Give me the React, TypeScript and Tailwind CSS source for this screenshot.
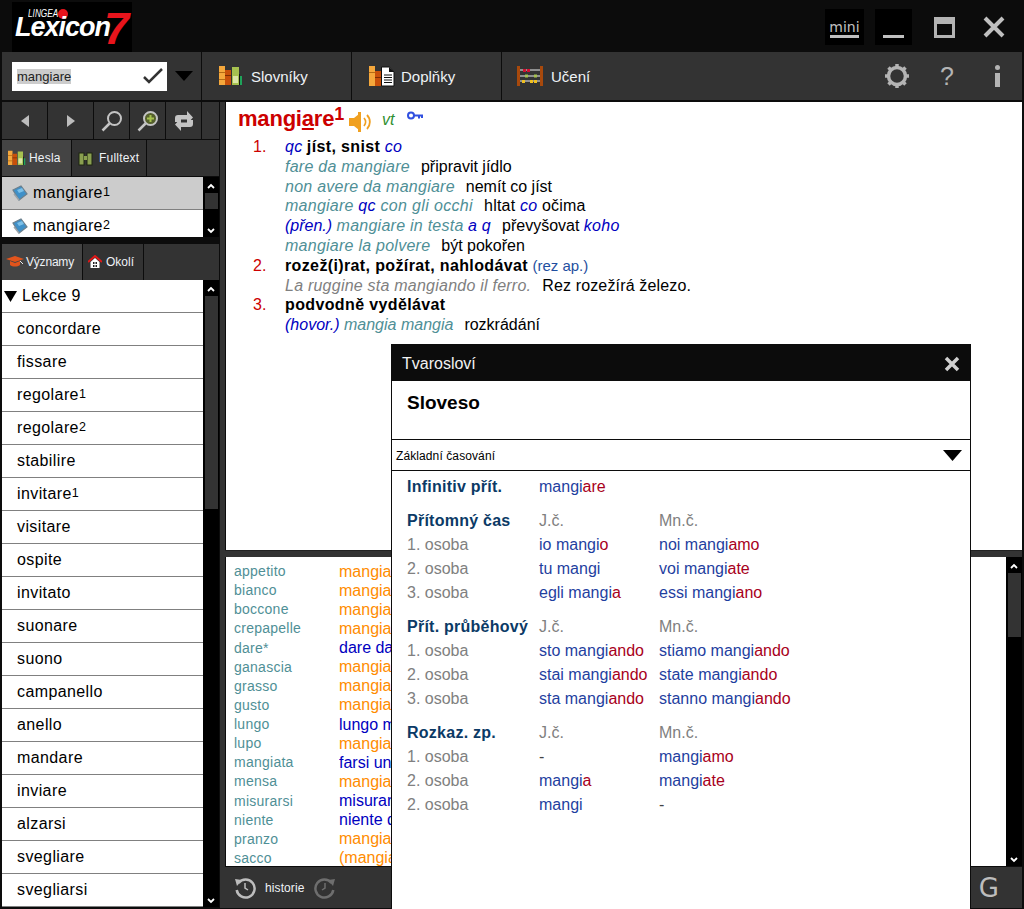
import React from "react";

const Books = ({ s = 1 }: { s?: number }) => (
  <svg width={24 * s} height={22 * s} viewBox="0 0 24 22">
    <rect x="0" y="1" width="6" height="19" fill="#f5a83c" />
    <rect x="0" y="7" width="6" height="1" fill="#b46a14" />
    <rect x="0" y="14" width="6" height="1" fill="#b46a14" />
    <rect x="6" y="5" width="6" height="15" fill="#c8500a" />
    <rect x="6" y="10" width="6" height="1" fill="#7c2c04" />
    <rect x="13" y="2" width="7" height="18" fill="#a6c14f" />
    <rect x="14" y="11" width="5" height="7" fill="#dde6a8" />
    <rect x="20" y="9" width="1" height="11" fill="#111" />
    <rect x="21" y="11" width="2" height="9" fill="#1fa35a" />
  </svg>
);

const DocBooks = () => (
  <svg width="26" height="21" viewBox="0 0 26 21">
    <rect x="0" y="0" width="6" height="20" fill="#f5a83c" />
    <rect x="0" y="6" width="6" height="1" fill="#b46a14" />
    <rect x="6" y="5" width="6" height="15" fill="#c8500a" />
    <rect x="6" y="11" width="6" height="1" fill="#7c2c04" />
    <path d="M12.5 1h8l4.500 5v14h-12.500z" fill="#fff" stroke="#111" strokeWidth="1" />
    <path d="M20 1v5h5z" fill="#111" />
    <path d="M15 9h8M15 11.500h8M15 14h8M15 16.500h8" stroke="#111" strokeWidth="1" />
  </svg>
);

const Abacus = () => (
  <svg width="26" height="20" viewBox="0 0 26 20">
    <rect x="0" y="0" width="3" height="20" fill="#a8490c" />
    <rect x="23" y="0" width="3" height="20" fill="#a8490c" />
    <path d="M3 4h20M3 10h20M3 15h20" stroke="#eee" strokeWidth="1" />
    <rect x="6" y="3" width="3" height="3" fill="#d01030" />
    <rect x="10" y="3" width="3" height="3" fill="#d01030" />
    <rect x="8" y="8.500" width="3" height="3" fill="#a6c14f" />
    <rect x="17" y="8.500" width="3" height="3" fill="#a6c14f" />
    <rect x="5" y="14" width="3" height="3" fill="#f0c020" />
    <rect x="13" y="14" width="3" height="3" fill="#f0c020" />
    <rect x="17" y="14" width="3" height="3" fill="#f0c020" />
  </svg>
);

const Tri = ({ dir }: { dir: "l" | "r" }) => (
  <svg width="10" height="14" viewBox="0 0 10 14">
    <path d={dir === "l" ? "M9 1v12L1 7z" : "M1 1v12l8-6z"} fill="#bdbdbd" />
  </svg>
);

const Lens = ({ plus }: { plus?: boolean }) => (
  <svg width="22" height="22" viewBox="0 0 22 22">
    <circle cx="13.500" cy="8.500" r="6.500" fill={plus ? "#55602c" : "none"} stroke="#c4c4c4" strokeWidth="2" />
    <path d="M8.500 13.500l-7 7" stroke="#c4c4c4" strokeWidth="2.500" />
    {plus && <path d="M13.500 5v7M10 8.500h7" stroke="#a6c14f" strokeWidth="2" />}
  </svg>
);

const Repeat = () => (
  <svg width="20" height="20" viewBox="0 0 20 20">
    <path d="M1 11V7a3 3 0 0 1 3-3h9V0l6 6.500-6 6.500V8.500H6V11z" fill="#c4c4c4" />
    <path d="M19 9v4a3 3 0 0 1-3 3H7v4l-6-6.500L7 7v4.500h7V9z" fill="#c4c4c4" />
  </svg>
);

const Dict = () => (
  <svg width="16" height="16" viewBox="0 0 16 16">
    <path d="M1 5l8-4 6 8-8 6z" fill="#3f90c8" stroke="#6b7f8c" strokeWidth="1.200" />
    <path d="M5 5l5-2 2 3-5 2z" fill="#7cc0e8" />
    <path d="M2 9l5 6" stroke="#9aa5ac" strokeWidth="1.500" />
  </svg>
);

const Scroll = ({ thumbTop, thumbH, className }: { thumbTop: number; thumbH: number; className: string }) => (
  <div className={`relative bg-black shrink-0 flex flex-col justify-between items-center ${className}`}>
    <svg width="8" height="6" viewBox="0 0 8 6" className="mt-[6px]">
      <path d="M1 5l3-3 3 3" stroke="#fff" strokeWidth="1.800" fill="none" />
    </svg>
    <svg width="8" height="6" viewBox="0 0 8 6" className="mb-[3px]">
      <path d="M1 1l3 3 3-3" stroke="#fff" strokeWidth="1.800" fill="none" />
    </svg>
    <div className="absolute left-[2px] right-[1px] bg-[#333333]" style={{ top: thumbTop, height: thumbH }} />
  </div>
);

const lesson: [string, string?][] = [
  ["concordare"], ["fissare"], ["regolare", "1"], ["regolare", "2"], ["stabilire"], ["invitare", "1"],
  ["visitare"], ["ospite"], ["invitato"], ["suonare"], ["suono"], ["campanello"], ["anello"], ["mandare"],
  ["inviare"], ["alzarsi"], ["svegliare"], ["svegliarsi"],
];

const related: [string, string, string][] = [
  ["appetito", "mangia", "text-[#ff8c00]"],
  ["bianco", "mangia", "text-[#ff8c00]"],
  ["boccone", "mangia", "text-[#ff8c00]"],
  ["crepapelle", "mangia", "text-[#ff8c00]"],
  ["dare*", "dare da", "text-[#0000c0]"],
  ["ganascia", "mangia", "text-[#ff8c00]"],
  ["grasso", "mangia", "text-[#ff8c00]"],
  ["gusto", "mangia", "text-[#ff8c00]"],
  ["lungo", "lungo m", "text-[#0000c0]"],
  ["lupo", "mangia", "text-[#ff8c00]"],
  ["mangiata", "farsi un", "text-[#0000c0]"],
  ["mensa", "mangia", "text-[#ff8c00]"],
  ["misurarsi", "misurar", "text-[#0000c0]"],
  ["niente", "niente d", "text-[#0000c0]"],
  ["pranzo", "mangia", "text-[#ff8c00]"],
  ["sacco", "(mangia", "text-[#ff8c00]"],
];

const Form = ({ a, b }: { a: string; b?: string }) => (
  <span className="text-[#1f3f9f]">
    {a}
    {b && <span className="text-[#a80020]">{b}</span>}
  </span>
);

const Row = ({ l, c2, c3, head, cls = "" }: { l: React.ReactNode; c2: React.ReactNode; c3?: React.ReactNode; head?: boolean; cls?: string }) => (
  <div className={`flex h-[24px] items-center ${cls}`}>
    <div className={`w-[132px] shrink-0 ${head ? "font-bold text-[#0b3a66] tracking-[0.25px]" : "text-[#808080]"}`}>{l}</div>
    <div className={`w-[120px] shrink-0 ${head ? "text-[#808080]" : ""}`}>{c2}</div>
    <div className={head ? "text-[#808080]" : ""}>{c3}</div>
  </div>
);

const Teal = ({ children }: { children: React.ReactNode }) => <i className="text-[#4f8f96] tracking-[0.25px]">{children}</i>;
const Blue = ({ children }: { children: React.ReactNode }) => <i className="text-[#0000c0] tracking-[0.25px]">{children}</i>;
const Bold = ({ children }: { children: React.ReactNode }) => <b className="tracking-[0.37px]">{children}</b>;
const Gap = () => <span className="inline-block w-[11px]" />;

const NavCell = ({ w, children }: { w: string; children?: React.ReactNode }) => (
  <div className={`${w} shrink-0 h-full bg-[#333333] flex items-center justify-center border-r-[1px] border-[#0c0c0c]`}>{children}</div>
);

export default function App() {
  return (
    <div className="relative w-[1024px] h-[909px] overflow-hidden bg-[#0c0c0c] flex flex-col text-black font-['Liberation_Sans',Arial,sans-serif]">
      {/* Title bar */}
      <div className="h-[52px] shrink-0 flex items-start pl-[12px] pr-[19px]">
        <div className="w-[120px] h-[50px] mt-[2px] bg-black relative overflow-hidden">
          <span className="absolute left-[16px] top-[5px] text-[11px] leading-[12px] italic text-white origin-left scale-x-75">LINGEA</span>
          <span className="absolute left-[46px] top-[7px] w-[10px] h-[10px] rounded-full bg-[#e8141c]" />
          <span className="absolute left-[3px] top-[10px] text-[27px] leading-[30px] font-bold italic text-white tracking-[-1px]">Lexicon</span>
          <span className="absolute left-[92px] top-[6px] text-[45px] leading-[42px] font-bold italic text-[#e8141c]">7</span>
        </div>
        <div className="flex-1" />
        <div className="w-[39px] h-[36px] mt-[9px] bg-black flex flex-col items-center pt-[11px]">
          <span className="text-[14px] leading-[14px] text-[#c0c0c0] font-['DejaVu_Sans',sans-serif]">mini</span>
          <span className="w-[29px] h-[3px] bg-[#c0c0c0] mt-[1px]" />
        </div>
        <div className="w-[37px] h-[36px] mt-[9px] ml-[11px] bg-black flex items-end justify-center pb-[7px]">
          <span className="w-[21px] h-[3px] bg-[#c0c0c0]" />
        </div>
        <div className="w-[21px] h-[21px] mt-[17px] ml-[22px] border-[3px] border-t-[7px] border-[#b4b4b4]" />
        <svg width="22" height="22" viewBox="0 0 22 22" className="mt-[16px] ml-[28px]">
          <path d="M2 2l18 18M20 2L2 20" stroke="#c0c0c0" strokeWidth="4" />
        </svg>
      </div>

      {/* Toolbar */}
      <div className="h-[49px] shrink-0 flex mx-[2px] w-[1020px] bg-[#333333] border-b-[1px] border-[#0c0c0c]">
        <div className="w-[200px] shrink-0 flex items-center pl-[10px] border-r-[1px] border-[#0c0c0c]">
          <div className="w-[155px] h-[29px] bg-white flex items-center pl-[5px] pr-[4px] justify-between">
            <span className="bg-[#cccccc] text-[13px] leading-[15px] text-[#222]">mangiare</span>
            <svg width="20" height="16" viewBox="0 0 20 16">
              <path d="M1 9l5 5L19 1" stroke="#333" strokeWidth="2.500" fill="none" />
            </svg>
          </div>
          <svg width="18" height="10" viewBox="0 0 18 10" className="ml-[8px]">
            <path d="M0 0h18L9 10z" fill="#000" />
          </svg>
        </div>
        <div className="w-[150px] shrink-0 border-r-[1px] border-[#0c0c0c] flex items-center pl-[17px] gap-[8px] text-[15px] text-[#eef2f6]">
          <Books />
          <span className="pt-[2px]">Slovníky</span>
        </div>
        <div className="w-[150px] shrink-0 border-r-[1px] border-[#0c0c0c] flex items-center pl-[17px] gap-[6px] text-[15px] text-[#eef2f6]">
          <DocBooks />
          <span className="pt-[2px]">Doplňky</span>
        </div>
        <div className="flex-1 flex items-center pl-[15px] gap-[8px] text-[15px] text-[#eef2f6]">
          <Abacus />
          <span className="pt-[2px]">Učení</span>
          <div className="flex-1" />
          <svg width="26" height="26" viewBox="0 0 26 26" className="mr-[22px]">
            <circle cx="13" cy="13" r="8.500" fill="none" stroke="#b4b4b4" strokeWidth="3.500" />
            <path d="M13 1v4M13 21v4M1 13h4M21 13h4M4.500 4.500l3 3M18.500 18.500l3 3M21.500 4.500l-3 3M7.500 18.500l-3 3" stroke="#b4b4b4" strokeWidth="3.500" />
          </svg>
          <span className="text-[25px] leading-[25px] text-[#b4b4b4] mr-[33px]">?</span>
          <div className="flex flex-col items-center mr-[22px]">
            <span className="w-[5px] h-[5px] rounded-full bg-[#b4b4b4]" />
            <span className="w-[5px] h-[14px] bg-[#b4b4b4] mt-[3px]" />
          </div>
        </div>
      </div>

      {/* Main */}
      <div className="h-[806px] shrink-0 mt-[1px] flex ml-[2px] w-[1020px]">
        {/* Left column */}
        <div className="w-[218px] shrink-0 flex flex-col">
          <div className="h-[37px] shrink-0 flex bg-[#333333]">
            <NavCell w="w-[46px]"><Tri dir="l" /></NavCell>
            <NavCell w="w-[46px]"><Tri dir="r" /></NavCell>
            <NavCell w="w-[36px]"><Lens /></NavCell>
            <NavCell w="w-[36px]"><Lens plus /></NavCell>
            <NavCell w="w-[36px]"><Repeat /></NavCell>
            <div className="flex-1 border-r-[1px] border-[#0c0c0c]" />
          </div>
          <div className="h-[36px] mt-[1px] shrink-0 flex bg-[#333333] text-[12px] text-[#eef2f6] tracking-[0.2px]">
            <div className="w-[70px] shrink-0 bg-[#444444] border-r-[1px] border-[#0c0c0c] flex items-center pl-[6px] gap-[3px]">
              <Books s={0.75} />
              <span>Hesla</span>
            </div>
            <div className="w-[75px] shrink-0 border-r-[1px] border-[#0c0c0c] flex items-center pl-[6px] gap-[6px]">
              <svg width="15" height="15" viewBox="0 0 15 15">
                <rect x="1" y="2" width="5" height="12" fill="#8aa050" stroke="#1c2410" />
                <rect x="9" y="2" width="5" height="12" fill="#8aa050" stroke="#1c2410" />
                <rect x="6" y="5" width="3" height="4" fill="#8aa050" />
              </svg>
              <span>Fulltext</span>
            </div>
            <div className="flex-1 border-r-[1px] border-[#0c0c0c]" />
          </div>
          <div className="h-[60px] mt-[1px] shrink-0 flex text-[16px] tracking-[0.4px] border-r-[1px] border-[#0c0c0c]">
            <div className="w-[201px] shrink-0 overflow-hidden bg-white">
              <div className="h-[33px] bg-[#cccccc] border-b-[1px] border-[#808080] flex items-center pl-[10px] gap-[5px]">
                <Dict />
                <span>mangiare<span className="text-[12.500px] align-[2px]">1</span></span>
              </div>
              <div className="h-[27px] flex items-center pl-[10px] gap-[5px] pt-[5px]">
                <Dict />
                <span>mangiare<span className="text-[12.500px] align-[2px]">2</span></span>
              </div>
            </div>
            <Scroll thumbTop={16} thumbH={16} className="flex-1" />
          </div>
          <div className="h-[36px] mt-[7px] shrink-0 flex bg-[#333333] text-[12px] text-[#eef2f6]">
            <div className="w-[81px] shrink-0 bg-[#444444] border-r-[1px] border-[#0c0c0c] flex items-center pl-[4px]">
              <svg width="20" height="14" viewBox="0 0 20 14">
                <path d="M0 4l9-3 9 3-9 3z" fill="#e2541c" />
                <path d="M4 6v4c3 2 7 2 10 0V6l-5 2z" fill="#e2541c" />
                <path d="M14 6l3 3" stroke="#eee" strokeWidth="1" />
              </svg>
              <span className="tracking-[-0.2px]">Významy</span>
            </div>
            <div className="w-[61px] shrink-0 border-r-[1px] border-[#0c0c0c] flex items-center pl-[5px] gap-[4px]">
              <svg width="14" height="14" viewBox="0 0 14 14">
                <path d="M0 7l7-6 7 6" fill="none" stroke="#e01818" strokeWidth="2" />
                <path d="M2.500 7L7 3l4.500 4v6h-9z" fill="#fff" />
                <rect x="5" y="7" width="1.500" height="2" fill="#222" />
                <rect x="7.500" y="7" width="1.500" height="2" fill="#222" />
                <rect x="5" y="10" width="1.500" height="2" fill="#222" />
                <rect x="7.500" y="10" width="1.500" height="2" fill="#222" />
              </svg>
              <span>Okolí</span>
            </div>
            <div className="flex-1 border-r-[1px] border-[#0c0c0c]" />
          </div>
          <div className="flex-1 min-h-0 flex text-[16px] tracking-[0.4px] pb-[1px]">
            <div className="w-[201px] shrink-0 overflow-hidden bg-white">
              <div className="h-[33px] flex items-center pl-[2px] gap-[5px] border-b-[1px] border-[#808080]">
                <svg width="13" height="11" viewBox="0 0 13 11">
                  <path d="M0 0h13L6.500 11z" fill="#000" />
                </svg>
                <span>Lekce 9</span>
              </div>
              {lesson.map(([w, n], i) => (
                <div key={i} className="h-[33px] flex items-center pl-[15px] border-b-[1px] border-[#808080]">
                  <span>{w}{n && <span className="text-[12.500px] align-[2px]">{n}</span>}</span>
                </div>
              ))}
            </div>
            <Scroll thumbTop={16} thumbH={213} className="w-[16px] mr-[1px]" />
          </div>
        </div>

        {/* Right column */}
        <div className="flex-1 min-w-0 flex flex-col bg-[#333333] pl-[5px]">
          <div className="h-[448px] shrink-0 bg-white border-l-[1px] border-[#0c0c0c] text-[16px] pl-[12px] pt-[2px]">
            <div className="flex items-center h-[30px]">
              <span className="text-[22px] leading-[24px] font-bold text-[#cc0000] whitespace-nowrap tracking-[-0.2px]">
                mangi<span className="underline underline-offset-[2px]">a</span>re<span className="text-[18px] leading-[0px] align-[6px]">1</span>
              </span>
              <svg width="23" height="20" viewBox="0 0 23 20" className="ml-[5px] mt-[5px]">
                <path d="M0 6h5l5-4v16l-5-4H0z" fill="#f0a020" />
                <rect x="9" y="0" width="3" height="20" fill="#f0a020" />
                <path d="M15 6a6 6 0 0 1 0 8M18 3a10 10 0 0 1 0 14" stroke="#f0a020" strokeWidth="1.800" fill="none" />
              </svg>
              <i className="ml-[10px] mt-[1px] text-[#2f8f2f] text-[16px]">vt</i>
              <svg width="16" height="10" viewBox="0 0 16 10" className="ml-[12px] mb-[7px]">
                <circle cx="4" cy="4.500" r="3" fill="none" stroke="#3050e0" strokeWidth="2" />
                <path d="M7 4.500h9M12 4.500v3M15 4.500v2.500" stroke="#3050e0" strokeWidth="2" />
              </svg>
            </div>
            <div className="leading-[19.800px] mt-[3px]">
              <div className="flex">
                <span className="w-[47px] pl-[15px] text-[#cc0000] shrink-0">1.</span>
                <div>
                  <div><Blue>qc</Blue> <Bold>jíst, snist</Bold> <Blue>co</Blue></div>
                  <div><Teal>fare da mangiare</Teal><Gap />připravit jídlo</div>
                  <div><Teal>non avere da mangiare</Teal><Gap />nemít co jíst</div>
                  <div className="tracking-[0.2px]"><Teal>mangiare</Teal> <Blue>qc</Blue> <i className="text-[#4f8f96] tracking-[0.35px]">con gli occhi</i><Gap />hltat <Blue>co</Blue> očima</div>
                  <div><i className="text-[#0000c0]">(přen.)</i> <Teal>mangiare in testa</Teal> <Blue>a q</Blue><Gap />převyšovat <Blue>koho</Blue></div>
                  <div><Teal>mangiare la polvere</Teal><Gap />být pokořen</div>
                </div>
              </div>
              <div className="flex">
                <span className="w-[47px] pl-[15px] text-[#cc0000] shrink-0">2.</span>
                <div>
                  <div><Bold>rozež(i)rat, požírat, nahlodávat</Bold> <span className="text-[15px] text-[#1f4fa0]">(rez ap.)</span></div>
                  <div><i className="text-[#808080] tracking-[0.23px]">La ruggine sta mangiando il ferro.</i><Gap /><span className="tracking-[0.15px]">Rez rozežírá železo.</span></div>
                </div>
              </div>
              <div className="flex">
                <span className="w-[47px] pl-[15px] text-[#cc0000] shrink-0">3.</span>
                <div>
                  <div><Bold>podvodně vydělávat</Bold></div>
                  <div><i className="text-[#0000c0]">(hovor.)</i> <i className="text-[#4f8f96]">mangia mangia</i><Gap />rozkrádání</div>
                </div>
              </div>
            </div>
          </div>
          <div className="h-[7px] shrink-0 bg-[#333333] border-t-[1px] border-[#222]" />
          <div className="h-[310px] shrink-0 flex bg-white border-l-[1px] border-b-[1px] border-[#0c0c0c]">
            <div className="flex-1 min-w-0 overflow-hidden pl-[8px] pt-[5px]">
              {related.map(([a, b, c]) => (
                <div key={a} className="flex h-[19.130px] items-center whitespace-nowrap">
                  <span className="w-[105px] shrink-0 text-[14px] text-[#4f8f96] tracking-[0.25px]">{a}</span>
                  <span className={`w-[52px] overflow-hidden text-[16px] ${c}`}>{b}</span>
                </div>
              ))}
            </div>
            <Scroll thumbTop={16} thumbH={64} className="w-[16px]" />
          </div>
          <div className="flex-1 -ml-[5px] flex items-center pl-[14px] text-[12px] text-[#eef2f6]">
            <svg width="22" height="22" viewBox="0 0 22 22">
              <path d="M4.500 6a9 9 0 1 1-1.800 7" fill="none" stroke="#bdbdbd" strokeWidth="2.500" />
              <path d="M1 2l7 1-5 6z" fill="#bdbdbd" />
              <path d="M11 6v5l3 2" fill="none" stroke="#bdbdbd" strokeWidth="1.500" />
            </svg>
            <span className="ml-[9px] tracking-[0.1px]">historie</span>
            <svg width="22" height="22" viewBox="0 0 22 22" className="ml-[10px]">
              <path d="M17.500 6a9 9 0 1 0 1.800 7" fill="none" stroke="#6e6e6e" strokeWidth="2.500" />
              <path d="M21 2l-7 1 5 6z" fill="#6e6e6e" />
              <path d="M11 6v5l-3 2" fill="none" stroke="#6e6e6e" strokeWidth="1.500" />
            </svg>
            <div className="flex-1" />
            <span className="text-[26px] leading-[26px] text-[#bdbdbd] mr-[23px] font-['DejaVu_Sans',sans-serif]">G</span>
          </div>
        </div>
      </div>

      {/* Tvarosloví dialog */}
      <div className="absolute left-[391px] top-[344px] w-[580px] h-[565px] bg-white border-x-[1px] border-[#0c0c0c] flex flex-col text-[16px]">
        <div className="h-[37px] shrink-0 bg-[#0c0c0c] flex items-center justify-between pl-[10px] pr-[10px] pt-[2px] text-[#f2f2f2]">
          <span>Tvarosloví</span>
          <svg width="16" height="16" viewBox="0 0 16 16">
            <path d="M2 2l12 12M14 2L2 14" stroke="#d0d0d0" strokeWidth="3.500" />
          </svg>
        </div>
        <div className="h-[59px] shrink-0 pl-[15px] pt-[11px] text-[19px] leading-[22px] font-bold border-b-[1px] border-[#0c0c0c]">Sloveso</div>
        <div className="h-[31px] shrink-0 flex items-center justify-between pl-[4px] pr-[8px] pt-[1px] text-[12px] tracking-[0.1px] border-b-[1px] border-[#0c0c0c]">
          <span>Základní časování</span>
          <svg width="19" height="11" viewBox="0 0 19 11">
            <path d="M0 0h19L9.500 11z" fill="#000" />
          </svg>
        </div>
        <div className="pl-[15px] pt-[4px] flex flex-col">
          <Row head l="Infinitiv přít." c2={<Form a="mangi" b="are" />} />
          <Row head cls="mt-[10px]" l="Přítomný čas" c2="J.č." c3="Mn.č." />
          <Row l="1. osoba" c2={<Form a="io mangi" b="o" />} c3={<Form a="noi mangi" b="amo" />} />
          <Row l="2. osoba" c2={<Form a="tu mangi" />} c3={<Form a="voi mangi" b="ate" />} />
          <Row l="3. osoba" c2={<Form a="egli mangi" b="a" />} c3={<Form a="essi mangi" b="ano" />} />
          <Row head cls="mt-[10px]" l="Přít. průběhový" c2="J.č." c3="Mn.č." />
          <Row l="1. osoba" c2={<Form a="sto mangi" b="ando" />} c3={<Form a="stiamo mangi" b="ando" />} />
          <Row l="2. osoba" c2={<Form a="stai mangi" b="ando" />} c3={<Form a="state mangi" b="ando" />} />
          <Row l="3. osoba" c2={<Form a="sta mangi" b="ando" />} c3={<Form a="stanno mangi" b="ando" />} />
          <Row head cls="mt-[10px]" l="Rozkaz. zp." c2="J.č." c3="Mn.č." />
          <Row l="1. osoba" c2={<span className="text-[#444]">-</span>} c3={<Form a="mangi" b="amo" />} />
          <Row l="2. osoba" c2={<Form a="mangi" b="a" />} c3={<Form a="mangi" b="ate" />} />
          <Row l="2. osoba" c2={<Form a="mangi" />} c3={<span className="text-[#444]">-</span>} />
        </div>
      </div>
    </div>
  );
}
